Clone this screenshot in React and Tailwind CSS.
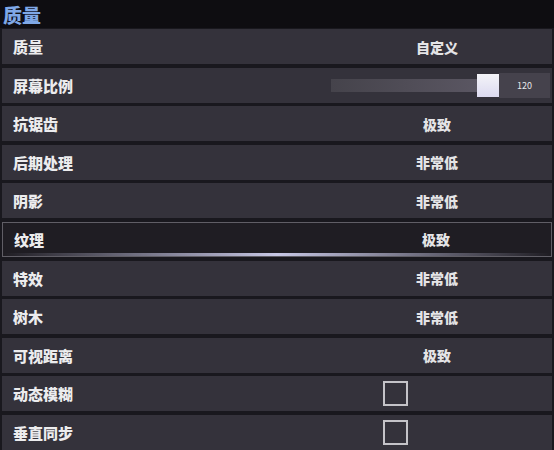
import React from "react";

const rows = [
  { label: "质量", value: "自定义" },
  { label: "屏幕比例", slider: true },
  { label: "抗锯齿", value: "极致" },
  { label: "后期处理", value: "非常低" },
  { label: "阴影", value: "非常低" },
  { label: "纹理", value: "极致", active: true },
  { label: "特效", value: "非常低" },
  { label: "树木", value: "非常低" },
  { label: "可视距离", value: "极致" },
  { label: "动态模糊", checkbox: true },
  { label: "垂直同步", checkbox: true },
];

function Row({ r }) {
  const base =
    "relative flex items-center h-[35px] shrink-0 mx-[2px] " +
    (r.active
      ? "bg-[#1f1d23] border border-[#605e66]"
      : "bg-[#34323b]");
  return (
    <div className={base}>
      <div className="w-[320px] pl-[11px] text-[15px] font-black text-[#ececee] leading-none">
        {r.label}
      </div>
      <div className="flex-1 flex items-center h-full">
        {r.value && (
          <div className="w-[230px] text-center text-[14px] font-black text-[#e4e4e6] leading-none">
            {r.value}
          </div>
        )}
        {r.slider && (
          <div className="flex items-center pl-[9px]">
            <div className="w-[146px] h-[13px] bg-gradient-to-r from-[#45434b] to-[#5a5662]" />
            <div className="w-[22px] h-[23px] bg-gradient-to-b from-[#f4f4f8] to-[#dcdaf0]" />
            <div className="w-[51px] h-[25px] bg-[#45424c] flex items-center justify-center text-[9px] text-[#e8e8ea] leading-none">
              120
            </div>
          </div>
        )}
        {r.checkbox && (
          <div className="pl-[61px] flex items-center">
            <div className="w-[25px] h-[25px] border-2 border-[#c4c3c8]" />
          </div>
        )}
      </div>
      {r.active && (
        <div className="absolute left-0 right-0 bottom-[0px] h-[3px] bg-gradient-to-r from-transparent via-[#c8c8e6] to-transparent blur-[0.5px]" />
      )}
    </div>
  );
}

export default function App() {
  return (
    <div
      className="w-[554px] h-[450px] overflow-hidden bg-[#19181e] flex flex-col"
      style={{ fontFamily: '"Noto Sans CJK SC", "Noto Sans", sans-serif' }}
    >
      <div className="h-[28px] shrink-0 bg-[#0e0d11] flex items-center pl-[3px]">
        <span className="text-[19px] font-black text-[#7fa8e6] leading-none">质量</span>
      </div>
      <div className="flex flex-col gap-[3.6px] pt-[1px]">
        {rows.map((r, i) => (
          <Row key={i} r={r} />
        ))}
      </div>
    </div>
  );
}
